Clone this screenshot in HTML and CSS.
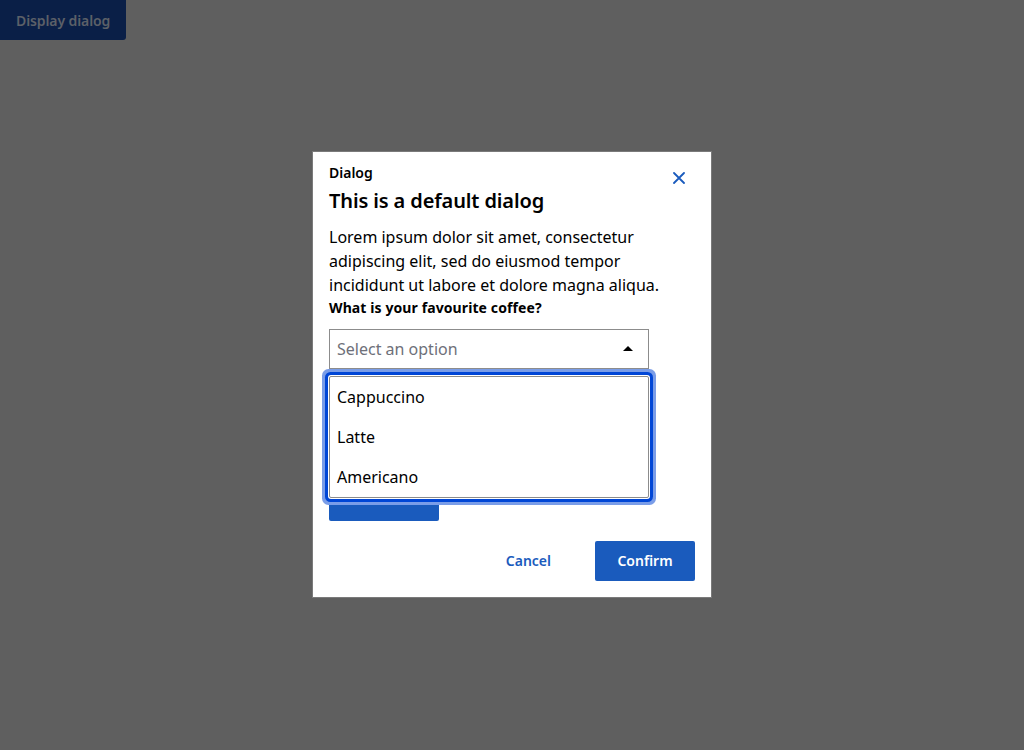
FILE: index.html
```html
<!DOCTYPE html>
<html lang="en">
<head>
<meta charset="utf-8">
<title>Dialog</title>
<link rel="stylesheet" href="styles.css">
</head>
<body>
<button class="trigger" type="button">Display dialog</button>
<div class="overlay">
  <div class="dialog" role="dialog" aria-labelledby="dlg-title">
    <div class="dialog-header">
      <div class="titles">
        <div class="eyebrow">Dialog</div>
        <h2 class="title" id="dlg-title">This is a default dialog</h2>
      </div>
      <button class="close" type="button" aria-label="Close">
        <svg width="12" height="12" viewBox="0 0 12 12" aria-hidden="true">
          <path d="M1 1 L11 11 M11 1 L1 11" stroke="#1a5bbd" stroke-width="1.8" stroke-linecap="round" fill="none"/>
        </svg>
      </button>
    </div>
    <p class="body-text">Lorem ipsum dolor sit amet, consectetur adipiscing elit, sed do eiusmod tempor incididunt ut labore et dolore magna aliqua.</p>
    <label class="field-label">What is your favourite coffee?</label>
    <div class="select-wrap">
      <div class="select">
        <span class="placeholder">Select an option</span>
        <span class="caret"></span>
      </div>
      <ul class="listbox" role="listbox">
        <li class="option">Cappuccino</li>
        <li class="option">Latte</li>
        <li class="option">Americano</li>
      </ul>
    </div>
    <button class="submit" type="button" aria-label="Submit"></button>
    <div class="footer">
      <button class="btn-ghost" type="button">Cancel</button>
      <button class="btn-primary" type="button">Confirm</button>
    </div>
  </div>
</div>
</body>
</html>
```

FILE: styles.css
```css
* { box-sizing: border-box; }

html, body {
  margin: 0;
  padding: 0;
  height: 100%;
}

body {
  background: #5f5f5f;
  font-family: "Noto Sans", "Open Sans", sans-serif;
  color: #000;
}

button {
  font-family: inherit;
  cursor: pointer;
}

.trigger {
  display: block;
  height: 40px;
  padding: 0 16px;
  border: 0;
  border-radius: 0 0 3px 0;
  background: #0a1f47;
  color: #5c6068;
  font-size: 14px;
  font-weight: 600;
  letter-spacing: -0.1px;
}

.overlay {
  position: fixed;
  inset: 0;
  display: flex;
  align-items: center;
  justify-content: center;
  padding-bottom: 2px;
}

.dialog {
  width: 400px;
  background: #fff;
  border: 1px solid #7a7a7a;
  padding: 11px 16px 16px;
  display: flex;
  flex-direction: column;
}

.dialog-header {
  display: flex;
  justify-content: space-between;
  align-items: flex-start;
}

.eyebrow {
  font-size: 14px;
  line-height: 20px;
  font-weight: 600;
}

.title {
  margin: 4px 0 0;
  font-size: 20px;
  line-height: 28px;
  font-weight: 600;
  letter-spacing: -0.12px;
}

.close {
  width: 32px;
  height: 32px;
  margin-top: -1px;
  border: 0;
  background: transparent;
  display: flex;
  align-items: center;
  justify-content: center;
  padding: 0;
}

.body-text {
  margin: 10px 0 0;
  font-size: 16px;
  line-height: 24px;
}

.field-label {
  display: block;
  margin: 1px 0 11px;
  font-size: 14px;
  line-height: 20px;
  font-weight: 700;
  letter-spacing: 0.1px;
}

.select-wrap {
  position: relative;
  width: 320px;
}

.select {
  height: 40px;
  border: 1px solid #8c8c8c;
  display: flex;
  align-items: center;
  justify-content: space-between;
  padding: 0 15px 0 7px;
}

.placeholder {
  font-size: 16px;
  color: #6e7079;
}

.caret {
  width: 0;
  height: 0;
  border-left: 5px solid transparent;
  border-right: 5px solid transparent;
  border-bottom: 5px solid #000;
}

.listbox {
  position: absolute;
  left: 0;
  right: 0;
  top: 47px;
  margin: 0;
  padding: 0;
  list-style: none;
  background: #fff;
  border: 1px solid #8c8c8c;
  border-radius: 2px;
  box-shadow: 0 0 0 1px #fff, 0 0 0 4px #0046d6, 0 0 0 7px #7a9de8;
  z-index: 2;
}

.option {
  height: 40px;
  display: flex;
  align-items: center;
  padding: 0 7px;
  font-size: 16px;
}

.submit {
  align-self: flex-start;
  width: 110px;
  height: 40px;
  margin-top: 112px;
  border: 0;
  border-radius: 2px;
  background: #1a5bbd;
}

.footer {
  display: flex;
  justify-content: flex-end;
  align-items: center;
  gap: 24px;
  margin-top: 20px;
}

.btn-ghost {
  height: 40px;
  padding: 0 20px;
  border: 0;
  background: transparent;
  color: #1a5bbd;
  font-size: 14px;
  font-weight: 600;
}

.btn-primary {
  width: 100px;
  height: 40px;
  border: 0;
  border-radius: 2px;
  background: #1a5bbd;
  color: #fff;
  font-size: 14px;
  font-weight: 600;
}
```
